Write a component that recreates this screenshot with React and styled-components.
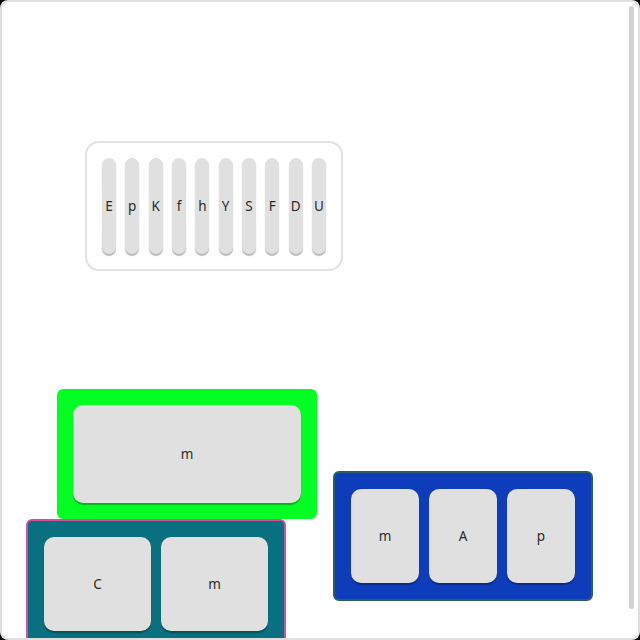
import styled, { createGlobalStyle } from 'styled-components';

const GlobalStyle = createGlobalStyle`
  html, body {
    margin: 0;
    padding: 0;
    background: #000;
  }
  body {
    font-family: "Noto Sans", "Open Sans", sans-serif;
  }
`;

const Frame = styled.div`
  position: relative;
  box-sizing: border-box;
  width: 640px;
  height: 640px;
  background: #fff;
  border: 2px solid #e0e0e0;
  border-radius: 8px;
  overflow: hidden;
`;

const ScrollBar = styled.div`
  position: absolute;
  top: 4px;
  right: 4px;
  width: 5px;
  height: 603px;
  border-radius: 3px;
  background: #d3d3d3;
`;

const Panel = styled.div`
  position: absolute;
  box-sizing: border-box;
  left: ${p => p.$x}px;
  top: ${p => p.$y}px;
  width: ${p => p.$w || 260}px;
  height: 130px;
  padding: 16px;
  display: flex;
  gap: 10px;
  background: ${p => p.$bg};
  border: ${p => (p.$border ? `2px solid ${p.$border}` : 'none')};
  border-radius: ${p => p.$radius || 6}px;
`;

const KeyRow = styled(Panel)`
  padding: 15px;
  gap: 9.5px;
`;

const Key = styled.div`
  flex: 1;
  display: flex;
  align-items: center;
  justify-content: center;
  background: #e0e0e0;
  border-radius: ${p => p.$radius || 10}px;
  box-shadow: 0 2px 1px rgba(0, 0, 0, 0.28);
  font-size: 13.5px;
  color: #2a2a2a;
`;

const letters = ['E', 'p', 'K', 'f', 'h', 'Y', 'S', 'F', 'D', 'U'];

export default function App() {
  return (
    <>
      <GlobalStyle />
      <Frame>
        <KeyRow $x={83} $y={139} $w={258} $bg="#fff" $border="#e2e2e2" $radius={14}>
          {letters.map(l => (
            <Key key={l} $radius={7}>{l}</Key>
          ))}
        </KeyRow>

        <Panel $x={55} $y={387} $bg="#00ff22">
          <Key>m</Key>
        </Panel>

        <Panel $x={24} $y={517} $bg="#08707f" $border="#d24fa2">
          <Key>C</Key>
          <Key>m</Key>
        </Panel>

        <Panel $x={331} $y={469} $bg="#0d3dbb" $border="#2b5f62">
          <Key>m</Key>
          <Key>A</Key>
          <Key>p</Key>
        </Panel>

        <ScrollBar />
      </Frame>
    </>
  );
}
